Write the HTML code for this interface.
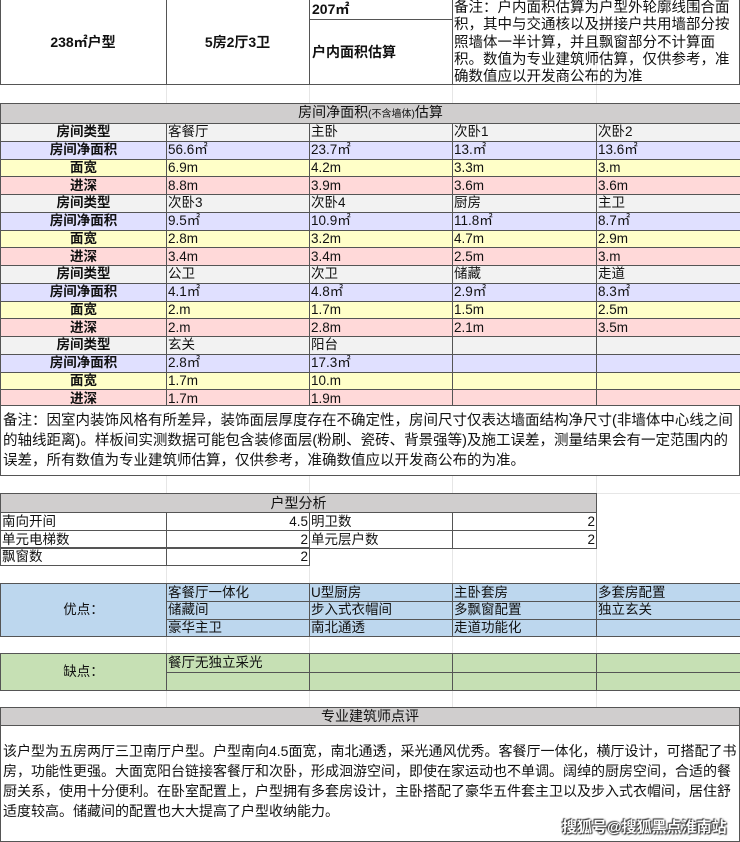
<!DOCTYPE html>
<html><head><meta charset="utf-8"><style>
*{margin:0;padding:0;box-sizing:border-box}
body{width:740px;height:842px;background:#fff;position:relative;overflow:hidden;font-family:"Liberation Sans","Noto Sans CJK SC",sans-serif;color:#111;font-size:13px}
.a{position:absolute}
table{border-collapse:collapse;table-layout:fixed;position:absolute;left:0;width:740px}
td{border:1px solid #555;padding:0 1px;white-space:nowrap;overflow:hidden;line-height:16px;font-size:13.5px}
.c{text-align:center}
.r{text-align:right}
.b{font-weight:bold}
.g{background:#f2f2f2}.l{background:#e0e0ff}.y{background:#ffffc8}.p{background:#ffd9d9}
.h{background:#d0cece;text-align:center;font-size:14px}
.bl{background:#bdd7ee}.gr{background:#c6e0b4}
.grid{position:absolute;top:0;width:1px;height:842px;background:#e6e6e6}
.hl{position:absolute;left:0;width:740px;height:1px;background:#e6e6e6}
</style></head><body>
<div class="grid" style="left:166px"></div><div class="grid" style="left:309px"></div><div class="grid" style="left:452px"></div><div class="grid" style="left:596px"></div>
<div class="hl" style="top:103px"></div><div class="hl" style="top:493px"></div><div class="hl" style="top:583px"></div><div class="hl" style="top:653px"></div><div class="hl" style="top:707px"></div>

<div class="a" style="left:0;top:0;width:740px;height:85px;border:1px solid #555;border-top:none"></div>
<div class="a b" style="left:0;top:0;width:166px;height:85px;line-height:85px;text-align:center;font-size:14px">238㎡户型</div>
<div class="a" style="left:166px;top:0;width:1px;height:85px;background:#555"></div>
<div class="a b" style="left:166px;top:0;width:143px;height:85px;line-height:85px;text-align:center;font-size:14px">5房2厅3卫</div>
<div class="a" style="left:309px;top:0;width:1px;height:85px;background:#555"></div>
<div class="a" style="left:309px;top:19px;width:143px;height:1px;background:#555"></div>
<div class="a b" style="left:312px;top:1px;font-size:14px;line-height:17px">207㎡</div>
<div class="a b" style="left:312px;top:44px;font-size:14px;line-height:17px">户内面积估算</div>
<div class="a" style="left:452px;top:0;width:1px;height:85px;background:#555"></div>
<div class="a" style="left:454px;top:0;width:278px;height:84px;overflow:hidden;font-size:14.5px;line-height:17.3px">备注：户内面积估算为户型外轮廓线围合面积，其中与交通核以及拼接户共用墙部分按照墙体一半计算，并且飘窗部分不计算面积。数值为专业建筑师估算，仅供参考，准确数值应以开发商公布的为准</div>

<table style="top:103px">
<colgroup><col style="width:166px"><col style="width:143px"><col style="width:143px"><col style="width:144px"><col style="width:144px"></colgroup>
<tr style="height:19px"><td colspan="5" class="h">房间净面积<span style="font-size:10px">(不含墙体)</span>估算</td></tr>
<tr style="height:17.75px" class="g"><td class="c b">房间类型</td><td>客餐厅</td><td>主卧</td><td>次卧1</td><td>次卧2</td></tr>
<tr style="height:17.75px" class="l"><td class="c b">房间净面积</td><td>56.6㎡</td><td>23.7㎡</td><td>13.㎡</td><td>13.6㎡</td></tr>
<tr style="height:17.75px" class="y"><td class="c b">面宽</td><td>6.9m</td><td>4.2m</td><td>3.3m</td><td>3.m</td></tr>
<tr style="height:17.75px" class="p"><td class="c b">进深</td><td>8.8m</td><td>3.9m</td><td>3.6m</td><td>3.6m</td></tr>
<tr style="height:17.75px" class="g"><td class="c b">房间类型</td><td>次卧3</td><td>次卧4</td><td>厨房</td><td>主卫</td></tr>
<tr style="height:17.75px" class="l"><td class="c b">房间净面积</td><td>9.5㎡</td><td>10.9㎡</td><td>11.8㎡</td><td>8.7㎡</td></tr>
<tr style="height:17.75px" class="y"><td class="c b">面宽</td><td>2.8m</td><td>3.2m</td><td>4.7m</td><td>2.9m</td></tr>
<tr style="height:17.75px" class="p"><td class="c b">进深</td><td>3.4m</td><td>3.4m</td><td>2.5m</td><td>3.m</td></tr>
<tr style="height:17.75px" class="g"><td class="c b">房间类型</td><td>公卫</td><td>次卫</td><td>储藏</td><td>走道</td></tr>
<tr style="height:17.75px" class="l"><td class="c b">房间净面积</td><td>4.1㎡</td><td>4.8㎡</td><td>2.9㎡</td><td>8.3㎡</td></tr>
<tr style="height:17.75px" class="y"><td class="c b">面宽</td><td>2.m</td><td>1.7m</td><td>1.5m</td><td>2.5m</td></tr>
<tr style="height:17.75px" class="p"><td class="c b">进深</td><td>2.m</td><td>2.8m</td><td>2.1m</td><td>3.5m</td></tr>
<tr style="height:17.75px" class="g"><td class="c b">房间类型</td><td>玄关</td><td>阳台</td><td></td><td></td></tr>
<tr style="height:17.75px" class="l"><td class="c b">房间净面积</td><td>2.8㎡</td><td>17.3㎡</td><td></td><td></td></tr>
<tr style="height:17.75px" class="y"><td class="c b">面宽</td><td>1.7m</td><td>10.m</td><td></td><td></td></tr>
<tr style="height:17.75px" class="p"><td class="c b">进深</td><td>1.7m</td><td>1.9m</td><td></td><td></td></tr>
</table>
<div class="a" style="left:0;top:405px;width:740px;height:71px;border:1px solid #555;background:#fff"></div>
<div class="a" style="left:3px;top:411px;width:735px;font-size:14.5px;line-height:20px">备注：因室内装饰风格有所差异，装饰面层厚度存在不确定性，房间尺寸仅表达墙面结构净尺寸(非墙体中心线之间的轴线距离)。样板间实测数据可能包含装修面层(粉刷、瓷砖、背景强等)及施工误差，测量结果会有一定范围内的误差，所有数值为专业建筑师估算，仅供参考，准确数值应以开发商公布的为准。</div>

<table style="top:493px;width:596px">
<colgroup><col style="width:166px"><col style="width:143px"><col style="width:143px"><col style="width:144px"></colgroup>
<tr style="height:19px"><td colspan="4" class="h">户型分析</td></tr>
<tr style="height:18px"><td>南向开间</td><td class="r">4.5</td><td>明卫数</td><td class="r">2</td></tr>
<tr style="height:18px"><td>单元电梯数</td><td class="r">2</td><td>单元层户数</td><td class="r">2</td></tr>
</table>
<table style="top:547px;width:309px">
<colgroup><col style="width:166px"><col style="width:143px"></colgroup>
<tr style="height:18px"><td>飘窗数</td><td class="r">2</td></tr>
</table>

<table style="top:583px" class="bl">
<colgroup><col style="width:166px"><col style="width:143px"><col style="width:143px"><col style="width:144px"><col style="width:144px"></colgroup>
<tr style="height:18px"><td rowspan="3" class="c">优点：</td><td>客餐厅一体化</td><td>U型厨房</td><td>主卧套房</td><td>多套房配置</td></tr>
<tr style="height:17.5px"><td>储藏间</td><td>步入式衣帽间</td><td>多飘窗配置</td><td>独立玄关</td></tr>
<tr style="height:17.5px"><td>豪华主卫</td><td>南北通透</td><td>走道功能化</td><td></td></tr>
</table>

<table style="top:653px" class="gr">
<colgroup><col style="width:166px"><col style="width:143px"><col style="width:143px"><col style="width:144px"><col style="width:144px"></colgroup>
<tr style="height:18.5px"><td rowspan="2" class="c">缺点：</td><td>餐厅无独立采光</td><td></td><td></td><td></td></tr>
<tr style="height:18px"><td></td><td></td><td></td><td></td></tr>
</table>

<div class="a" style="left:0;top:707px;width:740px;height:135px;border:1px solid #555;background:#fff"></div>
<div class="a h" style="left:0;top:707px;width:740px;height:19px;border:1px solid #555;line-height:17px">专业建筑师点评</div>
<div class="a" style="left:3px;top:741px;width:734px;font-size:14px;line-height:20px">该户型为五房两厅三卫南厅户型。户型南向4.5面宽，南北通透，采光通风优秀。客餐厅一体化，横厅设计，可搭配了书房，功能性更强。大面宽阳台链接客餐厅和次卧，形成洄游空间，即使在家运动也不单调。阔绰的厨房空间，合适的餐厨关系，使用十分便利。在卧室配置上，户型拥有多套房设计，主卧搭配了豪华五件套主卫以及步入式衣帽间，居住舒适度较高。储藏间的配置也大大提高了户型收纳能力。</div>
<div class="a b" style="left:562px;top:816px;font-size:15px;color:#fff;text-shadow:0 0 2px #333,1px 1px 1px #333,-1px -1px 1px #333">搜狐号@搜狐黑点淮南站</div>
</body></html>
